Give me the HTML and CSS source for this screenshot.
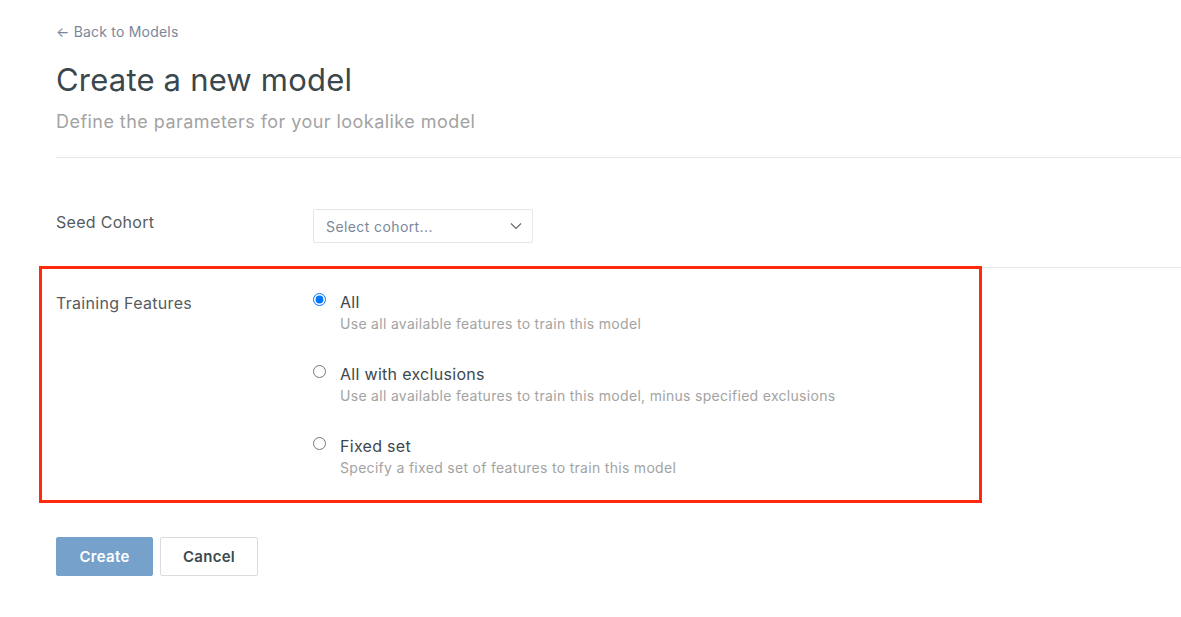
FILE: index.html
```html
<!DOCTYPE html>
<html lang="en">
<head>
    <meta charset="UTF-8">
    <meta name="viewport" content="width=device-width, initial-scale=1.0">
    <title>Create a new model</title>
    <link rel="stylesheet" href="styles.css">
</head>
<body>

    <div class="page">
        <a class="back-link" href="#">&larr; Back to Models</a>
        <h1>Create a new model</h1>
        <p class="subtitle">Define the parameters for your lookalike model</p>

        <div class="form-row seed-row">
            <div class="row-label">Seed Cohort</div>
            <div class="row-field">
                <div class="select">
                    <span>Select cohort...</span>
                    <svg width="12" height="8" viewBox="0 0 12 8"><path d="M1 1.5 L6 6.5 L11 1.5" fill="none" stroke="#666" stroke-width="1.1"/></svg>
                </div>
            </div>
        </div>

        <div class="form-row features-row">
            <!-- annotation box drawn over the row -->
            <div class="highlight"></div>
            <div class="row-label">Training Features</div>
            <div class="row-field">
                <label class="option">
                    <input type="radio" name="features" checked>
                    <span class="option-text">
                        <span class="option-title">All</span>
                        <span class="option-desc">Use all available features to train this model</span>
                    </span>
                </label>
                <label class="option">
                    <input type="radio" name="features">
                    <span class="option-text">
                        <span class="option-title">All with exclusions</span>
                        <span class="option-desc">Use all available features to train this model, minus specified exclusions</span>
                    </span>
                </label>
                <label class="option">
                    <input type="radio" name="features">
                    <span class="option-text">
                        <span class="option-title">Fixed set</span>
                        <span class="option-desc">Specify a fixed set of features to train this model</span>
                    </span>
                </label>
            </div>
        </div>

        <div class="actions">
            <button class="btn btn-primary">Create</button>
            <button class="btn">Cancel</button>
        </div>
    </div>

</body>
</html>
```
FILE: styles.css
```css
/* Basic styling */
body {
    margin: 0;
    font-family: Inter, "Liberation Sans", sans-serif;
    background: #fff;
    color: #3d4a4f;
}
.page {
    padding: 22px 0 0 56px;
}
.back-link {
    display: block;
    font-size: 14px;
    line-height: 20px;
    letter-spacing: 0.2px;
    color: #7b8799;
    text-decoration: none;
}
h1 {
    margin: 18px 0 0;
    font-size: 31px;
    line-height: 40px;
    font-weight: 400;
    letter-spacing: 0.2px;
    color: #3a474c;
}
.subtitle {
    margin: 10px 0 0;
    font-size: 18px;
    line-height: 24px;
    letter-spacing: 0.45px;
    color: #a3a3a3;
    padding-bottom: 23px;
    border-bottom: 1px solid #e8e8e8;
}

/* Form rows */
.form-row {
    display: flex;
    border-bottom: 1px solid #e8e8e8;
}
.row-label {
    width: 257px;
    font-size: 16px;
    line-height: 24px;
    letter-spacing: 0.3px;
    color: #555b5f;
}
.seed-row {
    padding: 51px 0 24px;
}
.seed-row .row-label {
    padding-top: 1px;
}
.select {
    width: 196px;
    height: 32px;
    border: 1px solid #e6e6e6;
    border-radius: 2px;
    display: flex;
    align-items: center;
    justify-content: space-between;
    padding: 0 10px 0 12px;
    font-size: 14px;
    letter-spacing: 0.4px;
    color: #7b8799;
}

.features-row {
    position: relative;
    border-bottom: none;
    padding: 23px 0 0;
    height: 212px;
}
.highlight {
    position: absolute;
    left: -17px;
    top: -2px;
    width: 937px;
    height: 231px;
    border: 3px solid #ff2a0c;
}
.option {
    display: flex;
    margin-bottom: 28px;
}
.option input {
    width: 13px;
    height: 13px;
    margin: 2px 14px 0 0;
}
.option-text {
    display: flex;
    flex-direction: column;
}
.option-title {
    font-size: 16px;
    line-height: 22px;
    letter-spacing: 0.3px;
    color: #3d474c;
}
.option-desc {
    font-size: 14px;
    line-height: 22px;
    letter-spacing: 0.3px;
    color: #a3a3a3;
}

/* Buttons */
.actions {
    display: flex;
    gap: 7px;
    margin-top: 34px;
}
.btn {
    height: 39px;
    width: 98px;
    font-family: inherit;
    font-size: 15px;
    font-weight: 600;
    letter-spacing: 0.3px;
    color: #3d4a4f;
    background: #fff;
    border: 1px solid #dcdcdc;
    border-radius: 2px;
}
.btn-primary {
    width: 97px;
    background: #75a1cb;
    border-color: #75a1cb;
    color: #fff;
}
```
